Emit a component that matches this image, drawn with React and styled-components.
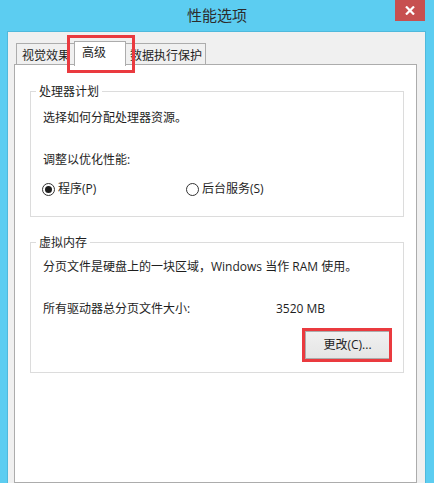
import React from 'react'
import styled, { createGlobalStyle } from 'styled-components'

const GlobalStyle = createGlobalStyle`
  html, body {
    margin: 0;
    padding: 0;
    background: #5ccdf1;
  }
  body {
    font-family: "Open Sans", "Noto Sans CJK SC", sans-serif;
    font-size: 12px;
    color: #1e1e1e;
  }
`

const Window = styled.div`
  width: 434px;
  height: 483px;
  background: #5ccdf1;
  display: flex;
  flex-direction: column;
  overflow: hidden;
`

const TitleBar = styled.div`
  height: 31px;
  flex-shrink: 0;
  display: grid;
  grid-template-columns: 1fr auto 1fr;
  align-items: start;
`

const Title = styled.div`
  grid-column: 2;
  padding-top: 5px;
  font-family: "Noto Sans CJK SC", sans-serif;
  font-size: 15px;
  line-height: 20px;
  color: #2c2c2c;
`

const CloseButton = styled.div`
  grid-column: 3;
  justify-self: end;
  margin-right: 9px;
  width: 30px;
  height: 21px;
  background: #c75050;
  display: flex;
  align-items: center;
  justify-content: center;
`

const Client = styled.div`
  flex: 1;
  margin: 0 8px 0 7px;
  background: #f0f0f0;
  border-top: 1px solid #4fb9dc;
  border-left: 1px solid #4fb9dc;
  border-right: 1px solid #4fb9dc;
  overflow: hidden;
  display: flex;
  flex-direction: column;
`

const TabStrip = styled.div`
  display: flex;
  align-items: flex-end;
  padding: 8px 0 0 8px;
  height: 25px;
  position: relative;
  z-index: 2;
`

const Tab = styled.div`
  position: relative;
  box-sizing: border-box;
  width: ${({ w }) => w}px;
  height: ${({ active }) => (active ? 25 : 22)}px;
  margin: ${({ active }) => (active ? '0 -2px -1px' : '0')};
  padding-left: ${({ pad }) => pad}px;
  background: ${({ active }) => (active ? '#ffffff' : '#f0f0f0')};
  border: 1px solid #acacac;
  border-bottom: ${({ active }) => (active ? 'none' : '1px solid #acacac')};
  z-index: ${({ active }) => (active ? 2 : 1)};
  font-family: "Noto Sans CJK SC", sans-serif;
  font-size: 12px;
  line-height: ${({ active }) => (active ? 20 : 21)}px;
  white-space: nowrap;
  color: #1e1e1e;
`

const RedMark = styled.div`
  position: absolute;
  top: ${({ t }) => t}px;
  left: ${({ l }) => l}px;
  right: ${({ r }) => r}px;
  bottom: ${({ b }) => b}px;
  border: 3px solid #ea3a3f;
  pointer-events: none;
  z-index: 5;
`

const Panel = styled.div`
  width: 403px;
  box-sizing: border-box;
  margin-left: 6px;
  margin-top: -1px;
  flex: 1;
  background: #ffffff;
  border: 1px solid #acacac;
  padding: 26px 0 0 15px;
  display: flex;
  flex-direction: column;
  gap: 25px;
`

const Group = styled.div`
  position: relative;
  width: 374px;
  box-sizing: border-box;
  border: 1px solid #dcdcdc;
  padding: ${({ pt }) => pt}px 12px ${({ pb }) => pb}px 12px;
  display: flex;
  flex-direction: column;
`

const GroupLabel = styled.div`
  position: absolute;
  top: -9px;
  left: 5px;
  padding: 0 3px;
  background: #ffffff;
  font-family: "Noto Sans CJK SC", sans-serif;
  line-height: 16px;
`

const Line = styled.div`
  line-height: 16px;
  margin-top: ${({ mt }) => mt || 0}px;
  white-space: nowrap;
`

const RadioRow = styled.div`
  display: grid;
  grid-template-columns: 144px auto;
  margin-top: 13px;
  margin-left: -1px;
`

const RadioOption = styled.label`
  display: flex;
  align-items: center;
  gap: 3px;
  line-height: 16px;
`

const RadioCircle = styled.span`
  width: 13px;
  height: 13px;
  box-sizing: border-box;
  border-radius: 50%;
  border: 1px solid #333333;
  background: #ffffff;
  display: flex;
  align-items: center;
  justify-content: center;

  &::after {
    content: '';
    width: 7px;
    height: 7px;
    border-radius: 50%;
    background: ${({ checked }) => (checked ? '#1e1e1e' : 'transparent')};
  }
`

const SizeRow = styled.div`
  display: grid;
  grid-template-columns: 233px auto;
  line-height: 16px;
  margin-top: 26px;
`

const ButtonRow = styled.div`
  display: flex;
  justify-content: flex-end;
  margin-top: 14px;
  padding-right: 1px;
`

const Button = styled.div`
  position: relative;
  width: 85px;
  height: 28px;
  box-sizing: border-box;
  border: 1px solid #acacac;
  background: linear-gradient(#f0f0f0, #e5e5e5);
  display: flex;
  align-items: center;
  justify-content: center;
  line-height: 16px;
`

function Radio({ checked, children }) {
  return (
    <RadioOption>
      <RadioCircle checked={checked} />
      {children}
    </RadioOption>
  )
}

export default function App() {
  return (
    <>
      <GlobalStyle />
      <Window>
        <TitleBar>
          <Title>性能选项</Title>
          <CloseButton>
            <svg width="10" height="9" viewBox="0 0 10 9">
              <path d="M1 0.5 L9 8.5 M9 0.5 L1 8.5" stroke="#ffffff" strokeWidth="2.2" />
            </svg>
          </CloseButton>
        </TitleBar>
        <Client>
          <TabStrip>
            <Tab w={60} pad={5}>视觉效果</Tab>
            <Tab w={52} pad={7} active>
              高级
              <RedMark t={-7} l={-8} r={-10} b={-7} />
            </Tab>
            <Tab w={82} pad={5}>数据执行保护</Tab>
          </TabStrip>
          <Panel>
            <Group pt={18} pb={19}>
              <GroupLabel>处理器计划</GroupLabel>
              <Line>选择如何分配处理器资源。</Line>
              <Line mt={26}>调整以优化性能:</Line>
              <RadioRow>
                <Radio checked>程序(P)</Radio>
                <Radio>后台服务(S)</Radio>
              </RadioRow>
            </Group>
            <Group pt={16} pb={13}>
              <GroupLabel>虚拟内存</GroupLabel>
              <Line>分页文件是硬盘上的一块区域，Windows 当作 RAM 使用。</Line>
              <SizeRow>
                <span>所有驱动器总分页文件大小:</span>
                <span>3520 MB</span>
              </SizeRow>
              <ButtonRow>
                <Button>
                  更改(C)...
                  <RedMark t={-4} l={-4} r={-3} b={-4} />
                </Button>
              </ButtonRow>
            </Group>
          </Panel>
        </Client>
      </Window>
    </>
  )
}
